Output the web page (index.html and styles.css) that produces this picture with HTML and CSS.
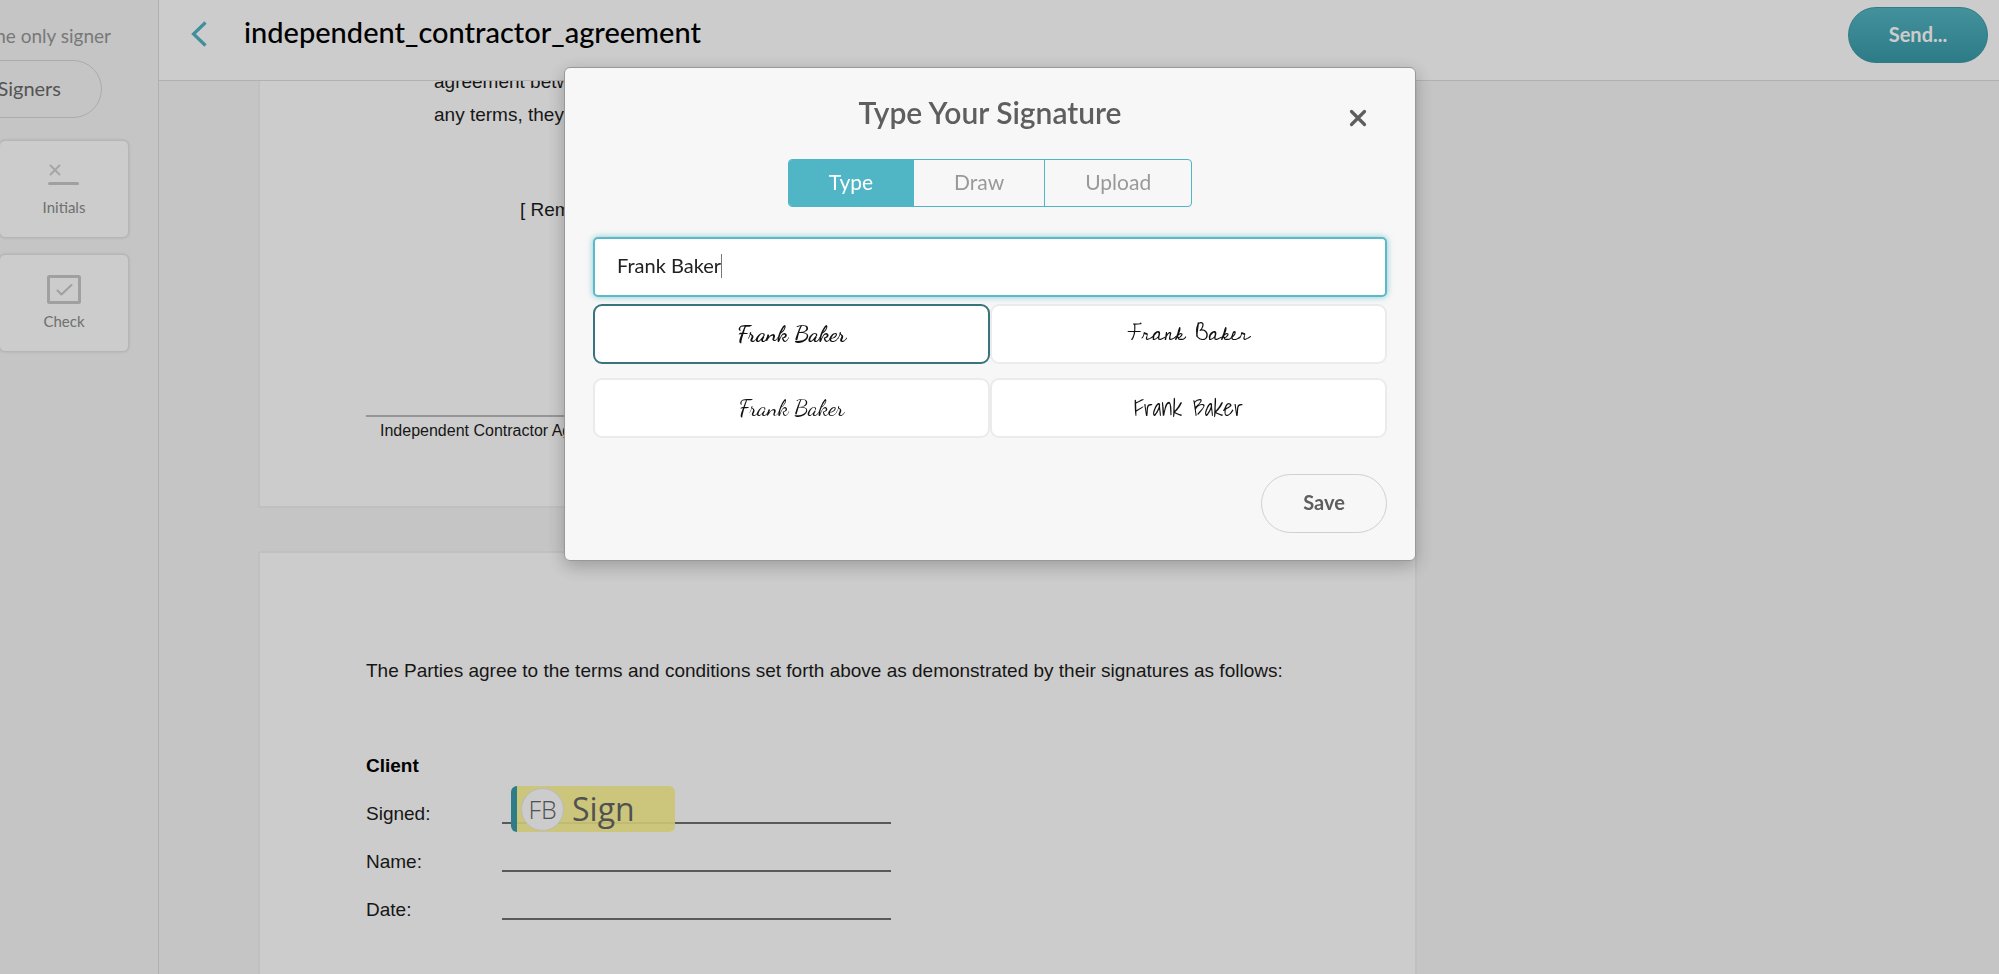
FILE: index.html
```html
<!DOCTYPE html>
<html lang="en">
<head>
<meta charset="utf-8">
<title>independent_contractor_agreement</title>
<link rel="stylesheet" href="styles.css">
</head>
<body>
<div class="app">
  <aside class="sidebar">
    <p class="signer-note">the only signer</p>
    <button class="signers-button" type="button">Signers</button>
    <div class="fields">
      <button class="field-card" type="button">
        <svg width="34" height="30" viewBox="0 0 34 30" fill="none" stroke="#d0d0d0" stroke-linecap="round"><path d="M3.500 4.500l9 9M12.500 4.500l-9 9" stroke-width="2"/><path d="M2.500 22.500h28" stroke="#c8c8c8" stroke-width="3"/></svg>
        <span>Initials</span>
      </button>
      <button class="field-card" type="button">
        <svg width="34" height="30" viewBox="0 0 34 30" fill="none" stroke="#c8c8c8" stroke-linecap="round" stroke-linejoin="round"><rect x="1.500" y="1.500" width="31" height="26" rx="1" stroke-width="3"/><path d="M10.500 15.500l4 4L24.500 10" stroke-width="2"/></svg>
        <span>Check</span>
      </button>
    </div>
  </aside>
  <div class="workspace">
    <header class="topbar">
      <button class="back" type="button" aria-label="Back"><svg width="18" height="26" viewBox="0 0 18 26" fill="none" stroke="#50b4c4" stroke-width="3.200"><path d="M15.500 1.500L3.500 13l12 11.500"/></svg></button>
      <h1 class="doc-title">independent_contractor_agreement</h1>
      <button class="send" type="button">Send...</button>
    </header>
    <main class="canvas">
      <section class="sheet sheet-first">
        <p class="clause">agreement between<br>any terms, they</p>
        <p class="remainder">[ Remainder</p>
        <footer class="sheet-footer">Independent Contractor Agreement</footer>
      </section>
      <section class="sheet sheet-second">
        <p>The Parties agree to the terms and conditions set forth above as demonstrated by their signatures as follows:</p>
        <h2 class="party">Client</h2>
        <dl class="lines">
          <dt>Signed:</dt>
          <dd class="blank"><button class="sign-field" type="button"><span class="avatar">FB</span>Sign</button></dd>
          <dt>Name:</dt>
          <dd class="blank"></dd>
          <dt>Date:</dt>
          <dd class="blank"></dd>
        </dl>
      </section>
    </main>
  </div>
</div>
<div class="overlay">
  <section class="modal" role="dialog" aria-modal="true" aria-labelledby="dialog-title">
    <button class="close" type="button" aria-label="Close"><svg width="18" height="18" viewBox="0 0 18 18" stroke="#5e5e5e" stroke-width="3.200" stroke-linecap="round"><path d="M2.500 2.500l13 13M15.500 2.500l-13 13"/></svg></button>
    <h2 class="modal-title" id="dialog-title">Type Your Signature</h2>
    <div class="tabs" role="tablist">
      <button class="tab tab-active" type="button" role="tab" aria-selected="true">Type</button>
      <button class="tab" type="button" role="tab" aria-selected="false">Draw</button>
      <button class="tab" type="button" role="tab" aria-selected="false">Upload</button>
    </div>
    <div class="name-field">
      <input class="name-input" type="text" value="Frank Baker" aria-label="Your name">
      <span class="caret"></span>
    </div>
    <div class="styles">
      <button class="style style-satisfy style-selected" type="button">Frank Baker</button>
      <button class="style style-script" type="button">Frank Baker</button>
      <button class="style style-dancing" type="button">Frank Baker</button>
      <button class="style style-hand" type="button">Frank Baker</button>
    </div>
    <button class="save" type="button">Save</button>
  </section>
</div>
</body>
</html>
```

FILE: styles.css
```css
* { box-sizing: border-box; }
html, body { height: 100%; margin: 0; overflow: hidden; }
body, button, input { font-family: "Proxima Nova", Lato, "Open Sans", sans-serif; }
p, h1, h2, dl, dd { margin: 0; }
button { cursor: pointer; }
svg { display: block; flex: none; }

.app { display: flex; height: 100vh; background: #f7f7f7; }

.sidebar {
  flex: none;
  width: 159px;
  padding: 24px 29px 0 0;
  border-right: 1px solid #dedede;
  overflow: hidden;
  display: flex;
  flex-direction: column;
  align-items: flex-end;
}
.signer-note { padding-right: 18px; font-size: 19px; line-height: 24px; color: #979797; white-space: nowrap; }
.signers-button {
  flex: none;
  width: 180px;
  height: 58px;
  margin: 12px 27px 22px 0;
  padding: 0 40px 2px;
  border: 1px solid #d6d6d6;
  border-radius: 29px;
  background: transparent;
  color: #6a6a6a;
  font-size: 20px;
  text-align: right;
}
.fields { display: grid; gap: 16px; }
.field-card {
  width: 130px;
  height: 98px;
  padding: 0;
  display: flex;
  flex-direction: column;
  align-items: center;
  justify-content: center;
  gap: 6px;
  border: 1px solid #e4e4e4;
  border-radius: 6px;
  background: #fff;
  box-shadow: 0 0 3px rgba(0, 0, 0, .14);
  color: #8c8c8c;
  font-size: 15px;
  line-height: 20px;
}

.workspace { flex: 1; min-width: 0; display: flex; flex-direction: column; }
.topbar {
  flex: none;
  height: 81px;
  padding: 7px 11px 0 31px;
  display: flex;
  align-items: flex-start;
  border-bottom: 1px solid #dedede;
  background: #fff;
}
.back { padding: 14px 0 0; border: 0; background: none; }
.doc-title { flex: 1; padding: 8px 0 0 36px; font-size: 29px; line-height: 34px; font-weight: 500; color: #000; }
.send {
  width: 140px;
  height: 56px;
  padding: 0 0 3px;
  border: 1px solid #3c9aa8;
  border-radius: 28px;
  background: linear-gradient(#54b6c3, #399ba9);
  color: #fff;
  font-size: 20px;
  font-weight: 700;
}

.canvas { flex: 1; min-height: 0; padding: 0 99px; overflow: hidden; }
.sheet {
  width: 1159px;
  padding: 0 106px;
  border: 2px solid #f0f0f0;
  background: #fff;
  color: #1c1c1c;
  font: 19px/48px "Liberation Sans", Arial, sans-serif;
}
.sheet-first { height: 427px; border-top: 0; overflow: hidden; }
.clause { margin: -16px 0 0 68px; line-height: 33px; }
.remainder { margin: 55px 0 0 154px; line-height: 48px; }
.sheet-footer { margin-top: 181px; padding: 3px 14px; border-top: 2px solid #bbb; font-size: 16px; line-height: 22px; }
.sheet-second { margin-top: 43px; padding-top: 94px; height: 600px; }
.party { margin-top: 47px; font-size: 19px; line-height: 48px; font-weight: 700; color: #000; }
.lines { display: grid; grid-template-columns: 136px 389px; grid-auto-rows: 48px; }
.blank { position: relative; height: 34px; border-bottom: 2px solid #707070; }
.sign-field {
  position: absolute;
  left: 9px;
  bottom: -10px;
  width: 164px;
  height: 46px;
  padding: 0 0 0 4px;
  display: flex;
  align-items: center;
  gap: 8px;
  border: 0;
  border-left: 6px solid #399ba9;
  border-radius: 6px;
  background: rgba(255, 247, 145, .9);
  color: #666;
  font: 32px/44px "Open Sans", sans-serif;
}
.avatar {
  width: 43px;
  height: 43px;
  border: 1px solid #e8e8e8;
  border-radius: 50%;
  background: #fff;
  font-size: 25px;
  font-weight: 300;
  line-height: 41px;
}

.overlay {
  position: fixed;
  inset: 0;
  padding: 67px 0 0 564px;
  background: rgba(0, 0, 0, .2);
}
.modal {
  position: relative;
  width: 852px;
  padding: 25px 28px 27px;
  display: flex;
  flex-direction: column;
  border: 1px solid #989898;
  border-radius: 6px;
  background: #f7f7f7;
  box-shadow: 0 5px 18px rgba(0, 0, 0, .25);
}
.close { position: absolute; top: 41px; right: 48px; padding: 0; border: 0; background: none; }
.modal-title { font-size: 30px; line-height: 38px; font-weight: 600; text-align: center; color: #5e5e5e; }
.tabs { align-self: center; display: flex; margin: 28px 0 30px; border: 1px solid #50b5c5; border-radius: 4px; overflow: hidden; }
.tab { height: 46px; padding: 0 40px 3px; border: 0; background: none; color: #999; font-size: 21px; }
.tab + .tab { border-left: 1px solid #50b5c5; }
.tab-active { background: #50b5c5; color: #fff; }
.name-field { position: relative; display: flex; }
.name-input {
  flex: 1;
  height: 60px;
  padding: 0 22px 4px;
  border: 2px solid #5bbac9;
  border-radius: 5px;
  outline: 0;
  background: #fff;
  box-shadow: 0 0 6px rgba(80, 181, 197, .7);
  color: #222;
  font-size: 20px;
}
.caret { position: absolute; left: 128px; top: 17px; width: 1px; height: 24px; background: #777; }
.styles { margin: 7px 0 36px; display: grid; grid-template-columns: 1fr 1fr; row-gap: 14px; }
.style { height: 60px; padding: 0 0 2px; border: 2px solid #ebebeb; border-radius: 9px; background: #fff; color: #111; font-size: 23px; }
.style-selected { border-color: #37747c; }
.style-satisfy { font-family: Satisfy, "Dancing Script", cursive; font-weight: 700; }
.style-script { font-family: "Cedarville Cursive", "Dancing Script", cursive; }
.style-dancing { font-family: "Dancing Script", cursive; }
.style-hand { font-family: "Shadows Into Light", Lato, cursive; }
.save { align-self: flex-end; width: 126px; height: 59px; padding: 0 0 3px; border: 1px solid #d0d0d0; border-radius: 30px; background: transparent; color: #5e5e5e; font-size: 20px; font-weight: 700; }
```
